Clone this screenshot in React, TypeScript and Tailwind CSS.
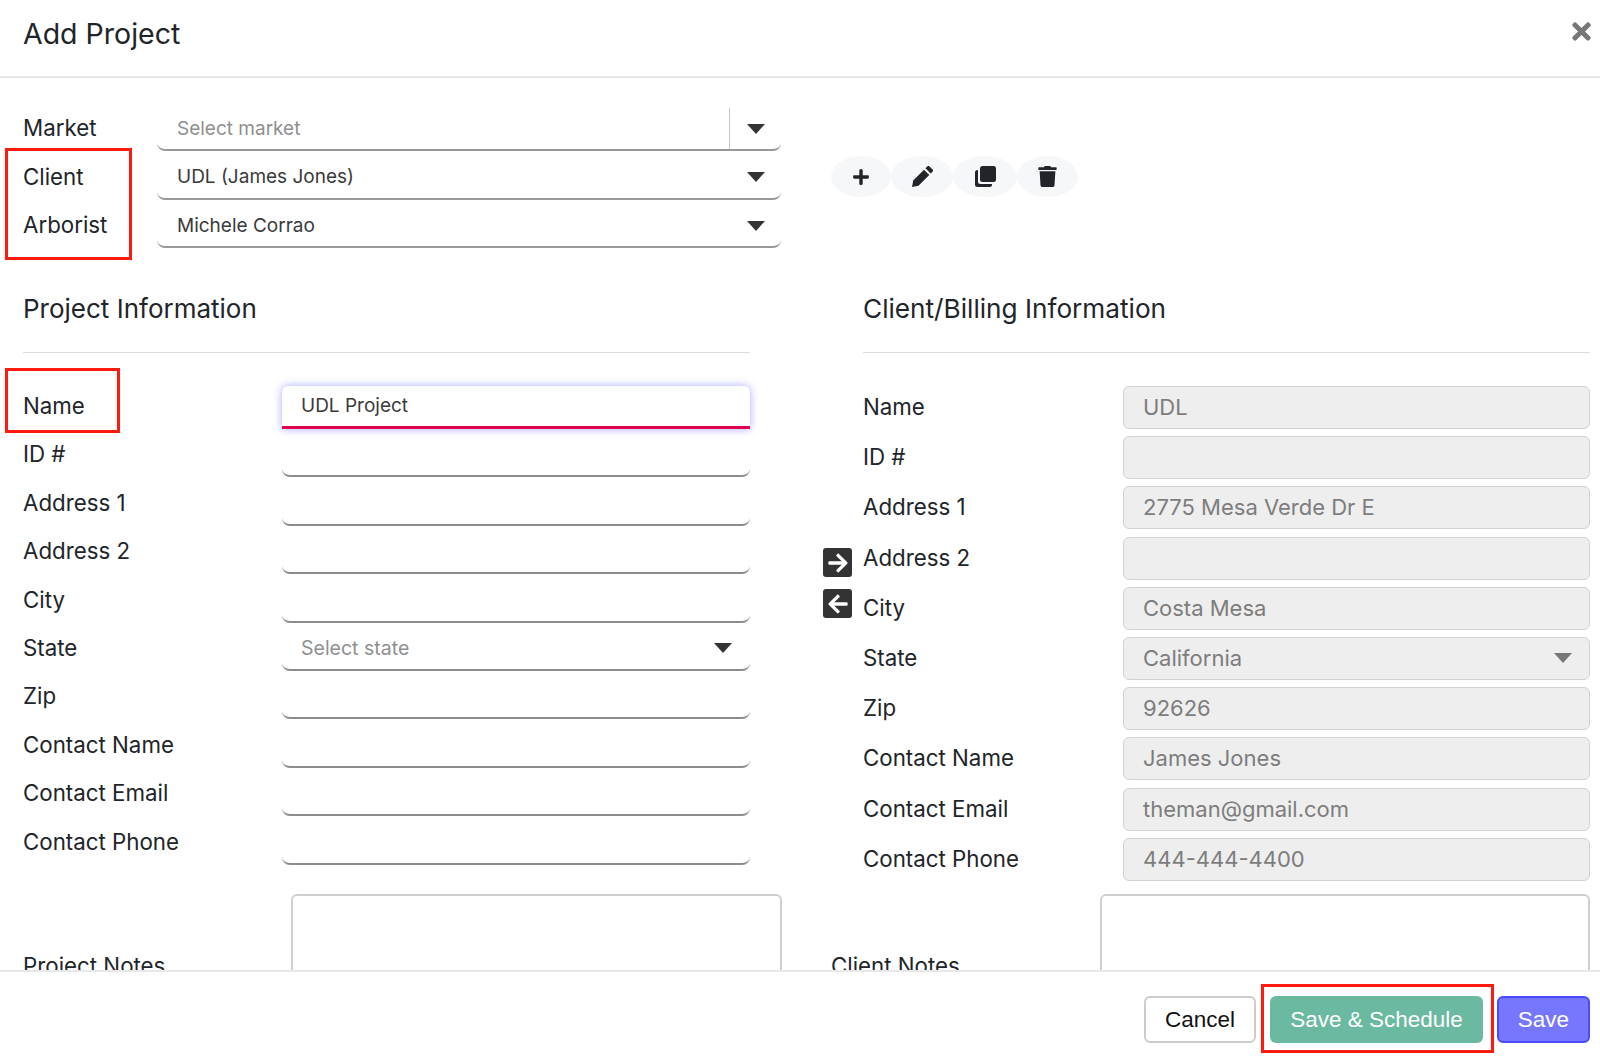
import React from "react";
import { FaPlus, FaTrash, FaTimes, FaArrowRight, FaArrowLeft } from "react-icons/fa";

const FONT = "font-['Inter',sans-serif]";

function Caret({ gray }: { gray?: boolean }) {
  return (
    <svg width="18" height="10" viewBox="0 0 18 10" className="shrink-0">
      <path d="M0 0h18L9 10z" fill={gray ? "#777777" : "#333333"} />
    </svg>
  );
}

function CopyIcon() {
  return (
    <svg width="21" height="21" viewBox="0 0 21 21" fill="#212529">
      <rect x="5" y="0" width="16" height="16" rx="2.5" />
      <path d="M0 6.5A2.5 2.5 0 0 1 2.5 4H3v11.5A2.5 2.5 0 0 0 5.500 18H17v.5a2.500 2.500 0 0 1-2.500 2.500h-12A2.500 2.500 0 0 1 0 18.500z" />
    </svg>
  );
}

function PencilIcon() {
  return (
    <svg width="21" height="21" viewBox="0 0 21 21" fill="#212529">
      <path d="M1.200 14.500 12 3.700l5.300 5.300L6.500 19.800 0 21z" />
      <path d="M13.400 2.300 15.200.500a1.700 1.700 0 0 1 2.400 0l2.900 2.900a1.700 1.700 0 0 1 0 2.400l-1.800 1.800z" />
    </svg>
  );
}

function IconBtn({ children, w }: { children: React.ReactNode; w: string }) {
  return <div className={`${w} h-[41px] rounded-[50%] bg-[#f6f7f9] flex items-center justify-center text-[#212529]`}>{children}</div>;
}

function Label({ text, lead = "leading-[39px]" }: { text: string; lead?: string }) {
  return <div className={`h-[43px] text-[22.300px] text-[#212529] ${lead}`}>{text}</div>;
}

function TopField({ text, placeholder, divider }: { text: string; placeholder?: boolean; divider?: boolean }) {
  return (
    <div className="w-[624px] h-[43px] border-b-2 border-[#999999] rounded-b-lg flex items-center pl-[20px]">
      <span className={`flex-1 pt-px text-[19px] ${placeholder ? "text-[#8f8f8f]" : "text-[#3a3a3a]"}`}>{text}</span>
      {divider ? (
        <div className="w-[52px] h-[41px] border-l border-[#c4c4c4] flex items-center pl-[17px]">
          <Caret />
        </div>
      ) : (
        <div className="w-[52px] pl-[18px] flex items-center">
          <Caret />
        </div>
      )}
    </div>
  );
}

const leftRows = ["Name", "ID #", "Address 1", "Address 2", "City", "State", "Zip", "Contact Name", "Contact Email", "Contact Phone"];
const rightRows: [string, string][] = [
  ["Name", "UDL"],
  ["ID #", ""],
  ["Address 1", "2775 Mesa Verde Dr E"],
  ["Address 2", ""],
  ["City", "Costa Mesa"],
  ["State", "California"],
  ["Zip", "92626"],
  ["Contact Name", "James Jones"],
  ["Contact Email", "theman@gmail.com"],
  ["Contact Phone", "444-444-4400"],
];

function LeftField({ name }: { name: string }) {
  if (name === "Name") {
    return (
      <div className="w-[468px] h-[43px] bg-white border-b-[3px] border-[#e0004d] rounded-t-md shadow-[0_0_8px_rgba(110,110,255,0.6)] flex items-center pl-[19px] text-[19px] text-[#3a3a3a]">
        UDL Project
      </div>
    );
  }
  return (
    <div className="w-[468px] h-[43px] border-b-2 border-[#8c8c8c] rounded-b-lg flex items-center pl-[19px] pr-[18px]">
      {name === "State" && (
        <>
          <span className="flex-1 text-[19.500px] text-[#8f8f8f]">Select state</span>
          <Caret />
        </>
      )}
    </div>
  );
}

export default function App() {
  return (
    <div className={`relative w-[1600px] h-[1061px] bg-white flex flex-col overflow-hidden ${FONT}`}>
      <header className="h-[78px] shrink-0 border-b-2 border-[#e8e8e8] flex items-start justify-between pl-[23px] pr-[6px]">
        <h1 className="text-[28.500px] leading-[68px] text-[#212529] font-normal">Add Project</h1>
        <FaTimes className="text-[#777777] mt-[18px] w-[25px] h-[27px]" />
      </header>

      <main className="flex-1 min-h-0 overflow-hidden pl-[23px] pr-[10px] pt-[30px]">
        <section className="flex">
          <div className="w-[135px] flex flex-col gap-[5.500px]">
            <Label text="Market" />
            <Label text="Client" />
            <Label text="Arborist" />
          </div>
          <div className="-ml-px flex flex-col gap-[5.500px]">
            <TopField text="Select market" placeholder divider />
            <TopField text="UDL (James Jones)" />
            <TopField text="Michele Corrao" />
          </div>
          <div className="flex ml-[50px] mt-[48px] self-start">
            <IconBtn w="w-[60px]"><FaPlus className="w-[18px] h-[18px]" /></IconBtn>
            <IconBtn w="w-[62px]"><PencilIcon /></IconBtn>
            <IconBtn w="w-[64px]"><CopyIcon /></IconBtn>
            <IconBtn w="w-[61px]"><FaTrash className="w-[19px] h-[21px]" /></IconBtn>
          </div>
        </section>

        <section className="flex mt-[38px]">
          <div className="w-[727px] shrink-0">
            <h2 className="text-[26px] leading-[46px] font-normal text-[#212529] border-b border-[#dddddd] h-[67px]">Project Information</h2>
            <div className="mt-[33px] flex flex-col gap-[5.400px]">
              {leftRows.map((r) => (
                <div key={r} className="flex items-start">
                  <div className="w-[259px]"><Label text={r} /></div>
                  <LeftField name={r} />
                </div>
              ))}
            </div>
          </div>
          <div className="w-[40px] ml-[73px] shrink-0 flex flex-col gap-[12px] pt-[262px]">
            <div className="w-[29px] h-[29px] rounded-[3px] bg-[#333333] flex items-center justify-center text-white"><FaArrowRight className="w-[22px] h-[22px]" /></div>
            <div className="w-[29px] h-[29px] rounded-[3px] bg-[#333333] flex items-center justify-center text-white"><FaArrowLeft className="w-[22px] h-[22px]" /></div>
          </div>
          <div className="flex-1 min-w-0">
            <h2 className="text-[26.200px] leading-[46px] font-normal text-[#212529] border-b border-[#dddddd] h-[67px]">Client/Billing Information</h2>
            <div className="mt-[33px] flex flex-col gap-[7.200px]">
              {rightRows.map(([l, v]) => (
                <div key={l} className="flex items-start">
                  <div className="w-[260px]"><Label text={l} lead="leading-[41px]" /></div>
                  <div className="flex-1 h-[43px] bg-[#eeeeee] border border-[#d2d2d2] rounded-md flex items-center justify-between pl-[19px] pr-[17px] text-[22px] text-[#7d7d7d]">
                    <span>{v}</span>
                    {l === "State" && <Caret gray />}
                  </div>
                </div>
              ))}
            </div>
          </div>
        </section>

        <section className="flex mt-[13px]">
          <div className="w-[268px] pt-[3px] flex items-center"><Label text="Project Notes" lead="leading-[43px]" /></div>
          <div className="w-[491px] h-[140px] border-2 border-[#cfcfcf] rounded-md bg-white" />
          <div className="w-[269px] ml-[49px] pt-[3px] flex items-center"><Label text="Client Notes" lead="leading-[43px]" /></div>
          <div className="w-[490px] h-[140px] border-2 border-[#cfcfcf] rounded-md bg-white" />
        </section>
      </main>

      <footer className="h-[91px] shrink-0 border-t-2 border-[#e8e8e8] flex items-start justify-end gap-[14px] pt-[24px] pr-[10px] font-['Liberation_Sans',sans-serif] text-[22.500px]">
        <button className="w-[112px] h-[47px] rounded-md border-2 border-[#cccccc] bg-white text-[#111111]">Cancel</button>
        <button className="w-[213px] h-[47px] rounded-md bg-[#6bb9a0] text-white">Save &amp; Schedule</button>
        <button className="w-[93px] h-[47px] rounded-md bg-[#7676ff] border-2 border-[#4a4aff] text-white">Save</button>
      </footer>

      <div className="absolute left-[5px] top-[148px] w-[127px] h-[112px] border-[3px] border-[#ff1a0f]" />
      <div className="absolute left-[5px] top-[368px] w-[115px] h-[65px] border-[3px] border-[#ff1a0f]" />
      <div className="absolute left-[1261px] top-[984px] w-[233px] h-[69px] border-[3px] border-[#ff1a0f]" />
    </div>
  );
}
